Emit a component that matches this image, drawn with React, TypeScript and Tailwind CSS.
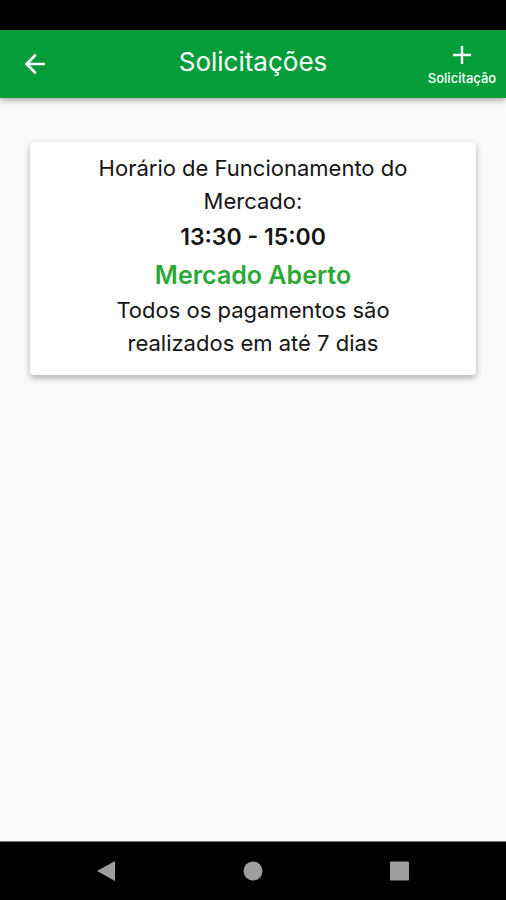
import type { ReactNode } from "react";

function NavButton({ label, children }: { label: string; children: ReactNode }) {
  return (
    <button type="button" aria-label={label} className="flex items-center justify-center">
      <svg width="20" height="20" viewBox="0 0 20 20" fill="#9e9e9e" aria-hidden="true">
        {children}
      </svg>
    </button>
  );
}

export default function App() {
  return (
    <div className="flex min-h-screen flex-col bg-[#fafafa] font-['Inter','Liberation_Sans',sans-serif] text-[#151515]">
      <div className="h-[30px] bg-black" />
      <header className="grid h-[68px] grid-cols-[88px_1fr_88px] bg-[#039e3a] text-white shadow-[0_2px_6px_rgba(0,0,0,0.35)]">
        <button type="button" aria-label="Voltar" className="flex items-center pl-6">
          <svg
            width="22"
            height="22"
            viewBox="0 0 22 22"
            fill="none"
            stroke="currentColor"
            strokeWidth="2.6"
            strokeLinecap="round"
            aria-hidden="true"
          >
            <path d="M20 11H3M11 2.5L2.5 11L11 19.5" />
          </svg>
        </button>
        <h1 className="pt-4 text-center text-[26px] leading-8">Solicitações</h1>
        <button type="button" className="flex flex-col items-center gap-1.5 pt-4">
          <svg
            width="18"
            height="18"
            viewBox="0 0 18 18"
            fill="none"
            stroke="currentColor"
            strokeWidth="2.4"
            aria-hidden="true"
          >
            <path d="M9 0V18M0 9H18" />
          </svg>
          <span className="text-[13px] leading-4 font-medium">Solicitação</span>
        </button>
      </header>
      <main className="flex-1 px-[30px] pt-11">
        <section className="rounded bg-white px-12 pt-[10px] pb-[15px] text-center text-[22px] leading-[33px] shadow-[0_3px_6px_rgba(0,0,0,0.3)]">
          <p>Horário de Funcionamento do Mercado:</p>
          <p className="text-[23px] leading-[38px] font-semibold">13:30 - 15:00</p>
          <p className="text-[25px] leading-[38px] font-semibold text-[#2aa834]">Mercado Aberto</p>
          <p>
            Todos os pagamentos são
            <br />
            realizados em até 7 dias
          </p>
        </section>
      </main>
      <nav
        aria-label="Sistema"
        className="grid h-[59px] grid-cols-3 border-t border-[#777777] bg-black px-[33px]"
      >
        <NavButton label="Voltar">
          <path d="M1 10L19 0V20Z" />
        </NavButton>
        <NavButton label="Início">
          <circle cx="10" cy="10" r="9.5" />
        </NavButton>
        <NavButton label="Recentes">
          <rect x="0" y="0.5" width="19" height="19" rx="1" />
        </NavButton>
      </nav>
    </div>
  );
}
